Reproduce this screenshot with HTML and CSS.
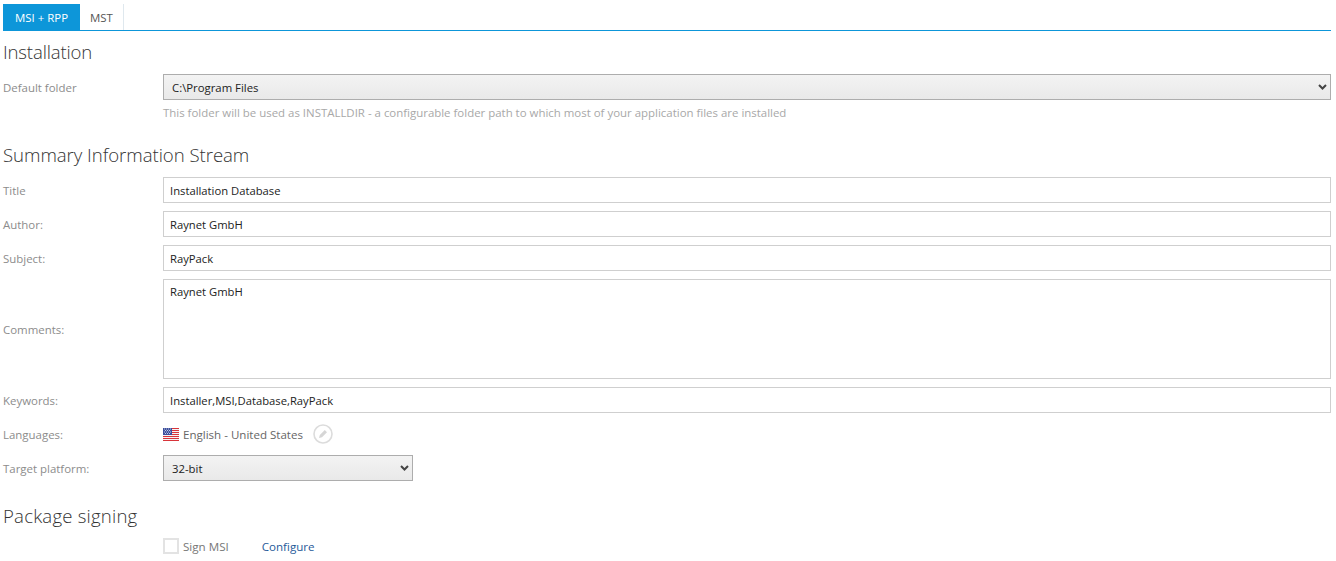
FILE: index.html
```html
<!DOCTYPE html>
<html lang="en">
<head>
<meta charset="utf-8">
<title>MSI + RPP</title>
<link rel="stylesheet" href="styles.css">
</head>
<body>
<nav class="tabs">
  <a class="tab tab-active">MSI + RPP</a>
  <a class="tab">MST</a>
</nav>
<main class="page">
  <h2 class="heading heading-first">Installation</h2>
  <div class="form">
    <label class="label">Default folder</label>
    <div class="select-wrap">
      <select class="select"><option>C:\Program Files</option></select>
      <svg class="chevron" viewBox="0 0 9 6" width="9" height="6"><path d="M1 1 4.5 4.5 8 1" fill="none" stroke="#444" stroke-width="2"/></svg>
    </div>
    <div class="hint">This folder will be used as INSTALLDIR - a configurable folder path to which most of your application files are installed</div>
  </div>

  <h2 class="heading heading-summary">Summary Information Stream</h2>
  <div class="form">
    <label class="label">Title</label>
    <input class="input" value="Installation Database">
    <label class="label">Author:</label>
    <input class="input" value="Raynet GmbH">
    <label class="label">Subject:</label>
    <input class="input" value="RayPack">
    <label class="label">Comments:</label>
    <textarea class="input textarea">Raynet GmbH</textarea>
    <label class="label">Keywords:</label>
    <input class="input" value="Installer,MSI,Database,RayPack">
    <label class="label">Languages:</label>
    <div class="languages">
      <svg class="flag" viewBox="0 0 16 13" width="16" height="13">
        <rect width="16" height="13" fill="#f4f4f4"/>
        <path d="M0 .5h16M0 2.5h16M0 4.5h16M0 6.5h16M0 8.5h16M0 10.5h16M0 12.5h16" stroke="#d8343a" stroke-width="1"/>
        <rect width="9" height="7" fill="#3c4f9c"/>
        <path d="M1 1h1M3 1h1M5 1h1M7 1h1M2 2.5h1M4 2.5h1M6 2.5h1M1 4h1M3 4h1M5 4h1M7 4h1M2 5.5h1M4 5.5h1M6 5.5h1" stroke="#dfe4f5" stroke-width=".8"/>
      </svg>
      <span class="lang-name">English - United States</span>
      <svg class="edit" viewBox="0 0 20 20" width="20" height="20">
        <circle cx="10" cy="10" r="9" fill="none" stroke="#dcdcdc" stroke-width="1.6"/>
        <path d="M6 14l.8-3 5-5 2.2 2.2-5 5z" fill="#d6d6d6"/>
      </svg>
    </div>
    <label class="label">Target platform:</label>
    <div class="select-wrap select-small">
      <select class="select"><option>32-bit</option></select>
      <svg class="chevron" viewBox="0 0 9 6" width="9" height="6"><path d="M1 1 4.5 4.5 8 1" fill="none" stroke="#444" stroke-width="2"/></svg>
    </div>
  </div>

  <h2 class="heading heading-signing">Package signing</h2>
  <div class="form">
    <span></span>
    <div class="signing">
      <label class="check"><span class="box"></span>Sign MSI</label>
      <a class="link">Configure</a>
    </div>
  </div>
</main>
</body>
</html>
```
FILE: styles.css
```css
html, body {
  margin: 0;
  height: 561px;
  overflow: hidden;
  background: #fff;
}
body {
  font-family: "Open Sans", "Noto Sans", sans-serif;
  font-size: 11.45px;
  color: #222;
}
.tabs {
  display: flex;
  margin: 4px 5px 0 3px;
  height: 26px;
  border-bottom: 1px solid #0d96d9;
}
.tab {
  display: flex;
  align-items: center;
  padding: 0 10px;
  color: #555;
  border-right: 1px solid #dfe8ee;
}
.tab-active {
  padding: 0 12px;
  background: #0d96d9;
  color: #fff;
  border-right: 0;
}
.page {
  padding: 0 5px 0 3px;
}
.heading {
  margin: 0;
  font-size: 18.6px;
  font-weight: 300;
  line-height: 26px;
  color: #333;
}
.heading-first { margin-top: 8px; margin-bottom: 9px; letter-spacing: -0.15px; }
.heading-summary { margin-top: 21px; margin-bottom: 9px; letter-spacing: -0.04px; }
.heading-signing { margin-top: 22px; margin-bottom: 8px; letter-spacing: 0.2px; }
.form {
  display: grid;
  grid-template-columns: 160px 1fr;
  row-gap: 8px;
  align-items: center;
}
.label {
  color: #8c8c8c;
}
.select-wrap {
  position: relative;
  height: 26px;
}
.select-small {
  width: 250px;
}
.select {
  display: block;
  width: 100%;
  height: 26px;
  box-sizing: border-box;
  margin: 0;
  padding: 0 0 0 8px;
  appearance: none;
  border: 1px solid #adadad;
  border-radius: 0;
  background: linear-gradient(#f3f3f3, #e9e9e9);
  font: inherit;
  font-size: 11.35px;
  color: #222;
}
.chevron {
  position: absolute;
  right: 4px;
  top: 10px;
  pointer-events: none;
}
.hint {
  grid-column: 2;
  margin-top: -3px;
  line-height: 16px;
  color: #a8a8a8;
}
.input {
  display: block;
  box-sizing: border-box;
  width: 100%;
  height: 26px;
  margin: 0;
  padding: 0 6px;
  border: 1px solid #cfcfcf;
  border-radius: 0;
  outline: 0;
  background: #fff;
  font: inherit;
  font-size: 11.25px;
  color: #222;
}
.textarea {
  height: 100px;
  padding-top: 4px;
  resize: none;
  overflow: hidden;
}
.languages {
  display: flex;
  align-items: center;
  height: 26px;
}
.flag {
  margin-right: 4px;
}
.lang-name {
  font-size: 11.55px;
  color: #666;
}
.edit {
  margin-left: 10px;
}
.signing {
  display: flex;
  align-items: center;
  gap: 33px;
  height: 18px;
}
.check {
  display: flex;
  align-items: center;
  gap: 4px;
  font-size: 11.6px;
  color: #777;
}
.box {
  width: 16px;
  height: 16px;
  box-sizing: border-box;
  border: 2px solid #e3e3e3;
}
.link {
  font-size: 11.6px;
  color: #1f5a99;
}
```
